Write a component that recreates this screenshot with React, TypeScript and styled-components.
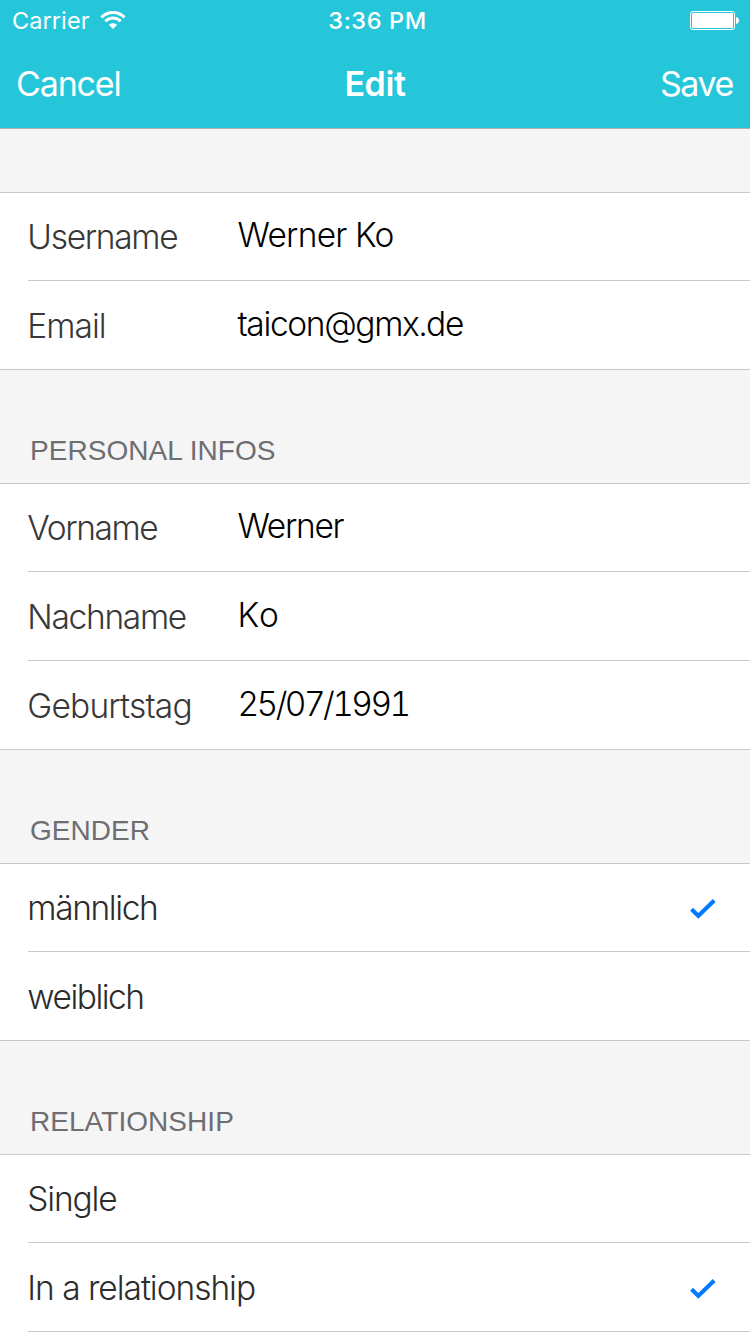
import React from 'react';
import styled, { createGlobalStyle } from 'styled-components';

const GlobalStyle = createGlobalStyle`
  * { box-sizing: border-box; }
  body {
    margin: 0;
    background: #f5f5f5;
    font-family: Inter, "Liberation Sans", sans-serif;
    overflow: hidden;
  }
`;

const Screen = styled.div`
  width: 750px;
  height: 1334px;
  overflow: hidden;
  background: #f5f5f5;
`;

const Header = styled.header`
  height: 129px;
  background: #26c6da;
  border-bottom: 1px solid #a7b0b2;
  color: #fff;
`;

const StatusBar = styled.div`
  display: grid;
  grid-template-columns: 1fr auto 1fr;
  align-items: center;
  height: 40px;
  padding: 0 11px 0 12px;
  font-size: 23.5px;
  line-height: 41px;
`;

const Carrier = styled.div`
  display: flex;
  align-items: center;
  gap: 10px;
  letter-spacing: 0.08px;
`;

const Clock = styled.div`
  font-weight: 500;
  letter-spacing: 0.6px;
  padding-left: 4px;
`;

const Battery = styled.svg`
  justify-self: end;
`;

const NavBar = styled.nav`
  display: grid;
  grid-template-columns: 1fr auto 1fr;
  height: 88px;
  padding: 0 17px 0 16px;
  font-size: 34px;
  line-height: 87px;
`;

const NavAction = styled.span<{ $end?: boolean; $tracking: number }>`
  justify-self: ${p => (p.$end ? 'end' : 'start')};
  letter-spacing: ${p => p.$tracking}px;
`;

const NavTitle = styled.span`
  padding-left: 1px;
  font-weight: 600;
  letter-spacing: -0.4px;
`;

const SectionHeader = styled.h2<{ $empty?: boolean }>`
  height: ${p => (p.$empty ? 63 : 113)}px;
  margin: 0;
  padding: ${p => (p.$empty ? 0 : '63px 0 0 30px')};
  color: #6d6d72;
  font: 400 28px/35px "Liberation Sans", sans-serif;
  letter-spacing: 0.05px;
`;

const Group = styled.div`
  background: #fff;
  border-top: 1px solid #c8c7cc;
  border-bottom: 1px solid #c8c7cc;
`;

const Label = styled.span<{ $tracking: number; $wide?: boolean }>`
  flex: ${p => (p.$wide ? '1' : '0 0 210px')};
  text-indent: -0.7px;
  color: ${p => (p.$wide ? '#2c2c2c' : '#383838')};
  letter-spacing: ${p => p.$tracking}px;
`;

const Value = styled.span<{ $tracking: number }>`
  color: #000;
  text-indent: -0.5px;
  margin-top: -2px;
  font-variant-numeric: tabular-nums;
  letter-spacing: ${p => p.$tracking}px;
`;

const Row = styled.div`
  display: flex;
  height: 89px;
  margin-left: 28px;
  padding-right: 34px;
  border-bottom: 1px solid #c8c7cc;
  font-size: 33.5px;
  font-weight: 300;
  line-height: 90px;
  white-space: nowrap;

  &:first-child { height: 88px; line-height: 88px; }
  &:last-child { height: 88px; border-bottom: 0; }
`;

const Check = styled.svg`
  align-self: flex-end;
  margin-bottom: 32px;
`;

interface Item {
  label: string;
  tracking: number;
  value?: string;
  valueTracking?: number;
  checked?: boolean;
}

const sections: { title?: string; items: Item[] }[] = [
  {
    items: [
      { label: 'Username', tracking: -1.3, value: 'Werner Ko', valueTracking: -0.75 },
      { label: 'Email', tracking: -1, value: 'taicon@gmx.de', valueTracking: -1.35 },
    ],
  },
  {
    title: 'PERSONAL INFOS',
    items: [
      { label: 'Vorname', tracking: -1.4, value: 'Werner', valueTracking: -1.3 },
      { label: 'Nachname', tracking: -1.3, value: 'Ko', valueTracking: 1.2 },
      { label: 'Geburtstag', tracking: -0.8, value: '25/07/1991', valueTracking: -2.55 },
    ],
  },
  {
    title: 'GENDER',
    items: [
      { label: 'männlich', tracking: -1.38, checked: true },
      { label: 'weiblich', tracking: -1.5 },
    ],
  },
  {
    title: 'RELATIONSHIP',
    items: [
      { label: 'Single', tracking: -1.15 },
      { label: 'In a relationship', tracking: -1.03, checked: true },
      { label: '', tracking: 0 },
    ],
  },
];

const WifiIcon = () => (
  <svg width="26" height="19" viewBox="0 0 26 19" fill="none" stroke="#fff">
    <path d="M1.4 6.4C8 -0.2 18 -0.2 24.6 6.4" strokeWidth="3" />
    <path d="M5.3 10.3C9.7 5.9 16.3 5.9 20.7 10.3" strokeWidth="2.8" />
    <path d="M13 18L8.8 13.7C11.2 11.6 14.8 11.6 17.2 13.7Z" fill="#fff" stroke="none" />
  </svg>
);

const BatteryIcon = () => (
  <Battery width="49" height="19" viewBox="0 0 49 19" fill="#fff">
    <rect x="0.5" y="0.5" width="44" height="18" rx="2.5" fill="none" stroke="#fff" />
    <rect x="2" y="2" width="41" height="15" rx="1" />
    <path d="M46 6C48 6.4 49 7.7 49 9.5C49 11.3 48 12.6 46 13Z" />
  </Battery>
);

const CheckIcon = () => (
  <Check width="26" height="20" viewBox="0 0 26 20" fill="none" stroke="#007aff" strokeWidth="4.2">
    <path d="M1.6 10.3L8.3 16.9L24.2 1.6" />
  </Check>
);

export default function App() {
  return (
    <Screen>
      <GlobalStyle />
      <Header>
        <StatusBar>
          <Carrier>
            Carrier
            <WifiIcon />
          </Carrier>
          <Clock>3:36 PM</Clock>
          <BatteryIcon />
        </StatusBar>
        <NavBar>
          <NavAction $tracking={-1.15}>Cancel</NavAction>
          <NavTitle>Edit</NavTitle>
          <NavAction $end $tracking={-1.4}>Save</NavAction>
        </NavBar>
      </Header>
      {sections.map((section, i) => (
        <section key={i}>
          <SectionHeader $empty={!section.title}>{section.title}</SectionHeader>
          <Group>
            {section.items.map((item, j) => (
              <Row key={j}>
                <Label $wide={!item.value} $tracking={item.tracking}>{item.label}</Label>
                {item.value && <Value $tracking={item.valueTracking ?? 0}>{item.value}</Value>}
                {item.checked && <CheckIcon />}
              </Row>
            ))}
          </Group>
        </section>
      ))}
    </Screen>
  );
}
